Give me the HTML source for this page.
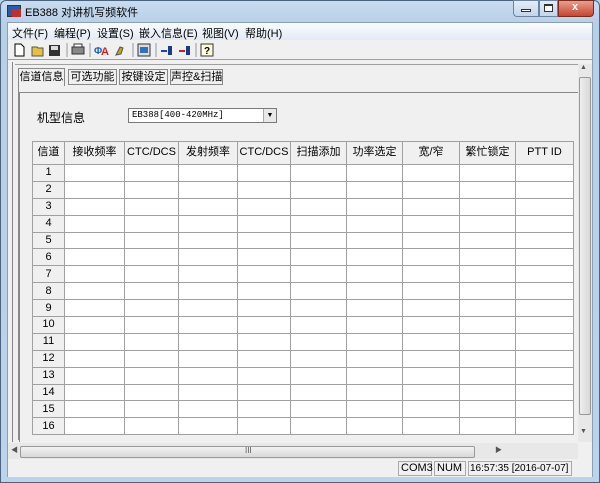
<!DOCTYPE html><html><head><meta charset="utf-8"><style>
*{margin:0;padding:0;box-sizing:border-box;white-space:nowrap}
body{width:600px;height:483px;overflow:hidden;background:#bcd3ea;font-family:"Liberation Sans","Noto Sans CJK SC",sans-serif;font-size:11px;color:#000;position:relative}
.a{position:absolute}
.win{left:0;top:0;width:600px;height:483px;border:1px solid #4a6480;border-radius:6px 6px 0 0;background:linear-gradient(#c9dcf0,#b8cfe8 22px,#bcd3ea)}
.cl{left:7px;top:22px;width:586px;height:455px;background:#f0f0f0;border:1px solid #8aa0b8}
table{border-collapse:collapse;table-layout:fixed}
td{border:1px solid #a0a0a0;height:16.9px;background:#fff;text-align:center;font-size:11px;padding:0;line-height:15px;overflow:hidden}
td.h{background:#f0f0f0}
tr.hd td{background:#f0f0f0;height:23px;vertical-align:top;padding-top:3px;font-size:11px}
.tab{height:16px;border:1px solid #888;background:#f0f0f0;text-align:center;line-height:14px;font-size:11px;top:69px}
.sb{top:461px;height:15px;border:1px solid #aaa;line-height:13px;font-size:11px;padding-left:2px}
</style></head><body>
<div class="a win"></div>
<div class="a" style="left:7px;top:5px;width:14px;height:12px;background:#2a5aa8;border:1px solid #333"></div>
<div class="a" style="left:12px;top:9px;width:9px;height:8px;background:#c03030"></div>
<div class="a" style="left:25px;top:4px;font-size:11px">EB388 对讲机写频软件</div>
<div class="a" style="left:513px;top:0;width:26px;height:17px;border:1px solid #6a84a0;border-radius:0 0 0 4px;background:linear-gradient(#e4edf7,#c2d5ea)"></div>
<div class="a" style="left:521px;top:9px;width:10px;height:3px;border:1px solid #333;background:#fff"></div>
<div class="a" style="left:539px;top:0;width:19px;height:17px;border:1px solid #6a84a0;background:linear-gradient(#e4edf7,#c2d5ea)"></div>
<div class="a" style="left:544px;top:4px;width:9px;height:8px;border:1px solid #333;border-top-width:2px;background:#fff"></div>
<div class="a" style="left:558px;top:0;width:36px;height:17px;border:1px solid #7a2a20;border-radius:0 0 4px 0;background:linear-gradient(#e8a08c,#c8452f)"></div>
<div class="a" style="left:572px;top:1px;color:#fff;font-weight:bold;font-size:11px">x</div>
<div class="a cl"></div>
<div class="a" style="left:8px;top:23px;width:584px;height:17px;background:linear-gradient(#fafcfe,#e3eaf4)"></div>
<div class="a" style="left:12px;top:25px;font-size:11px">文件(F)</div>
<div class="a" style="left:54px;top:25px;font-size:11px">编程(P)</div>
<div class="a" style="left:97px;top:25px;font-size:11px">设置(S)</div>
<div class="a" style="left:139px;top:25px;font-size:11px">嵌入信息(E)</div>
<div class="a" style="left:202px;top:25px;font-size:11px">视图(V)</div>
<div class="a" style="left:245px;top:25px;font-size:11px">帮助(H)</div>
<div class="a" style="left:8px;top:40px;width:584px;height:20px;border-bottom:1px solid #a0a0a0;background:#f0f0f0"></div>
<svg class="a" style="left:12px;top:41px" width="210" height="18">
<path d="M3 3h6l3 3v9H3z" fill="#fff" stroke="#000"/>
<path d="M20 6h5l1 1h5v8H20z" fill="#e8c040" stroke="#555"/>
<rect x="37" y="4" width="11" height="11" fill="#333"/><rect x="39" y="5" width="7" height="4" fill="#ddd"/>
<line x1="55" y1="2" x2="55" y2="16" stroke="#999"/>
<rect x="60" y="6" width="12" height="7" fill="#888" stroke="#333"/><rect x="62" y="3" width="8" height="3" fill="#fff" stroke="#333"/>
<line x1="78" y1="2" x2="78" y2="16" stroke="#999"/>
<text x="82" y="13" font-size="10" fill="#1a5ec8" font-weight="bold">Φ</text><text x="89" y="14" font-size="11" fill="#d02020" font-weight="bold">A</text>
<path d="M104 14l4-8 3 1-2 6z" fill="#c8a020" stroke="#555"/>
<line x1="121" y1="2" x2="121" y2="16" stroke="#999"/>
<rect x="126" y="3" width="12" height="12" fill="#ddd" stroke="#333"/><rect x="128" y="6" width="8" height="6" fill="#3070c0"/>
<line x1="144" y1="2" x2="144" y2="16" stroke="#999"/>
<path d="M149 10h6" stroke="#1a4aa8" stroke-width="2"/><rect x="156" y="5" width="4" height="9" fill="#1a3a88"/>
<path d="M167 10h6" stroke="#d02020" stroke-width="2"/><rect x="174" y="5" width="4" height="9" fill="#1a3a88"/>
<line x1="184" y1="2" x2="184" y2="16" stroke="#999"/>
<rect x="189" y="3" width="12" height="12" fill="#ffffe0" stroke="#333"/><text x="192" y="13" font-size="10" font-weight="bold">?</text>
</svg>
<div class="a" style="left:15px;top:64px;width:563px;height:1px;background:#a0a0a0"></div>
<div class="a tab" style="left:18px;top:68px;width:47px;height:18px;border-bottom:none;line-height:16px">信道信息</div>
<div class="a tab" style="left:68px;width:49px">可选功能</div>
<div class="a tab" style="left:119px;width:49px">按键设定</div>
<div class="a tab" style="left:170px;width:53px">声控&amp;扫描</div>
<div class="a" style="left:18px;top:85px;width:1px;height:355px;background:#888"></div>
<div class="a" style="left:12px;top:62px;width:1px;height:380px;background:#888"></div>
<div class="a" style="left:19px;top:92px;width:560px;height:1px;background:#888"></div>
<div class="a" style="left:19px;top:92px;width:1px;height:350px;background:#888"></div>
<div class="a" style="left:37px;top:109px;font-size:12px">机型信息</div>
<div class="a" style="left:128px;top:108px;width:149px;height:15px;border:1px solid #7a7a7a;background:#fff;font-family:'Liberation Mono',monospace;font-size:9px;line-height:13px;padding-left:3px">EB388[400-420MHz]</div>
<div class="a" style="left:263px;top:109px;width:13px;height:13px;background:#e8e8e8;border-left:1px solid #aaa;font-size:7px;text-align:center;line-height:13px">▼</div>
<table class="a" style="left:32px;top:141px;width:541px">
<colgroup><col style="width:32px"><col style="width:60px"><col style="width:54px"><col style="width:59px"><col style="width:53px"><col style="width:56px"><col style="width:56px"><col style="width:57px"><col style="width:56px"><col style="width:58px"></colgroup>
<tr class="hd"><td>信道</td><td>接收频率</td><td>CTC/DCS</td><td>发射频率</td><td>CTC/DCS</td><td>扫描添加</td><td>功率选定</td><td>宽/窄</td><td>繁忙锁定</td><td>PTT ID</td></tr>
<tr><td class="h">1</td><td></td><td></td><td></td><td></td><td></td><td></td><td></td><td></td><td></td></tr>
<tr><td class="h">2</td><td></td><td></td><td></td><td></td><td></td><td></td><td></td><td></td><td></td></tr>
<tr><td class="h">3</td><td></td><td></td><td></td><td></td><td></td><td></td><td></td><td></td><td></td></tr>
<tr><td class="h">4</td><td></td><td></td><td></td><td></td><td></td><td></td><td></td><td></td><td></td></tr>
<tr><td class="h">5</td><td></td><td></td><td></td><td></td><td></td><td></td><td></td><td></td><td></td></tr>
<tr><td class="h">6</td><td></td><td></td><td></td><td></td><td></td><td></td><td></td><td></td><td></td></tr>
<tr><td class="h">7</td><td></td><td></td><td></td><td></td><td></td><td></td><td></td><td></td><td></td></tr>
<tr><td class="h">8</td><td></td><td></td><td></td><td></td><td></td><td></td><td></td><td></td><td></td></tr>
<tr><td class="h">9</td><td></td><td></td><td></td><td></td><td></td><td></td><td></td><td></td><td></td></tr>
<tr><td class="h">10</td><td></td><td></td><td></td><td></td><td></td><td></td><td></td><td></td><td></td></tr>
<tr><td class="h">11</td><td></td><td></td><td></td><td></td><td></td><td></td><td></td><td></td><td></td></tr>
<tr><td class="h">12</td><td></td><td></td><td></td><td></td><td></td><td></td><td></td><td></td><td></td></tr>
<tr><td class="h">13</td><td></td><td></td><td></td><td></td><td></td><td></td><td></td><td></td><td></td></tr>
<tr><td class="h">14</td><td></td><td></td><td></td><td></td><td></td><td></td><td></td><td></td><td></td></tr>
<tr><td class="h">15</td><td></td><td></td><td></td><td></td><td></td><td></td><td></td><td></td><td></td></tr>
<tr><td class="h">16</td><td></td><td></td><td></td><td></td><td></td><td></td><td></td><td></td><td></td></tr>
</table>
<div class="a" style="left:578px;top:64px;width:14px;height:378px;background:#e8e8e8"></div>
<div class="a" style="left:580px;top:64px;font-size:7px;color:#555">▲</div>
<div class="a" style="left:579px;top:77px;width:12px;height:338px;border:1px solid #999;border-radius:2px;background:linear-gradient(90deg,#eee,#d8d8d8)"></div>
<div class="a" style="left:580px;top:428px;font-size:7px;color:#555">▼</div>
<div class="a" style="left:8px;top:443px;width:570px;height:16px;background:#e8e8e8"></div>
<div class="a" style="left:11px;top:445px;font-size:7px;color:#555">◀</div>
<div class="a" style="left:20px;top:446px;width:455px;height:12px;border:1px solid #999;border-radius:2px;background:linear-gradient(#f2f2f2,#d8d8d8)"></div>
<div class="a" style="left:245px;top:446px;font-size:8px;color:#555">III</div>
<div class="a" style="left:495px;top:445px;font-size:7px;color:#555">▶</div>
<div class="a" style="left:8px;top:459px;width:584px;height:18px;background:#f0f0f0"></div>
<div class="a sb" style="left:398px;width:34px">COM3</div>
<div class="a sb" style="left:434px;width:32px">NUM</div>
<div class="a sb" style="left:468px;width:104px;overflow:hidden;font-size:10px;padding-left:1px">16:57:35 [2016-07-07]</div>
</body></html>
